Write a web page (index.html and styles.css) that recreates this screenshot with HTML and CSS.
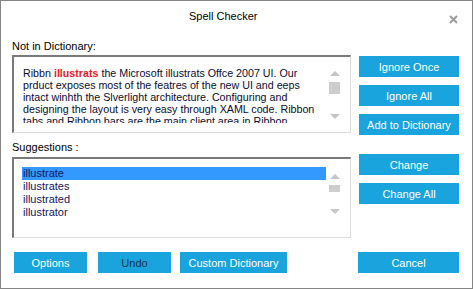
FILE: index.html
```html
<!DOCTYPE html>
<html lang="en">

<head>
    <meta charset="UTF-8">
    <title>Spell Checker</title>
    <link rel="stylesheet" href="styles.css">
</head>

<body>
    <div class="window">
        <div class="titlebar">
            <span class="title">Spell Checker</span>
            <svg class="close" width="9" height="9" viewBox="0 0 9 9">
                <path d="M1 1L8 8M8 1L1 8" stroke="#9c9c9c" stroke-width="2" />
            </svg>
        </div>
        <div class="main">
            <div class="left">
                <div class="label">Not in Dictionary:</div>
                <div class="box textbox">
                    <div class="text">
                        Ribbn <b class="err">illustrats</b> the Microsoft illustrats Offce 2007 UI. Our<br>
                        prduct exposes most of the featres of the new UI and eeps<br>
                        intact winhth the Slverlight architecture. Configuring and<br>
                        designing the layout is very easy through XAML code. Ribbon<br>
                        tabs and Ribbon bars are the main client area in Ribbon<br>
                        control.
                    </div>
                    <div class="scroll">
                        <span class="arrow up"></span>
                        <span class="thumb"></span>
                        <span class="arrow down"></span>
                    </div>
                </div>
                <div class="label label2">Suggestions :</div>
                <div class="box listbox">
                    <ul class="list">
                        <li class="sel">illustrate</li>
                        <li>illustrates</li>
                        <li>illustrated</li>
                        <li>illustrator</li>
                    </ul>
                    <div class="scroll scroll2">
                        <span class="arrow up"></span>
                        <span class="thumb"></span>
                        <span class="arrow down"></span>
                    </div>
                </div>
            </div>
            <div class="right">
                <button class="btn">Ignore Once</button>
                <button class="btn">Ignore All</button>
                <button class="btn">Add to Dictionary</button>
                <button class="btn change">Change</button>
                <button class="btn">Change All</button>
            </div>
        </div>
        <div class="footer">
            <button class="btn small">Options</button>
            <button class="btn small undo">Undo</button>
            <button class="btn custom">Custom Dictionary</button>
            <button class="btn cancel">Cancel</button>
        </div>
    </div>
</body>

</html>
```

FILE: styles.css
```css
html,
body {
    margin: 0;
    padding: 0;
    background-color: #fff;
}

body {
    font-family: "Liberation Sans", Arial, sans-serif;
    font-size: 11px;
    color: #000;
}

.window {
    width: 473px;
    height: 289px;
    box-sizing: border-box;
    border: 1px solid #858585;
    display: flex;
    flex-direction: column;
}

/* 标题栏 */
.titlebar {
    height: 38px;
    display: flex;
    align-items: flex-start;
    padding-top: 8px;
    box-sizing: border-box;
}

.title {
    margin-left: 188px;
    font-size: 11px;
    line-height: 14px;
}

.close {
    margin-left: auto;
    margin-right: 14px;
    margin-top: 6px;
}

.main {
    display: flex;
    padding: 0 13px 0 11px;
}

.left {
    width: 339px;
    display: flex;
    flex-direction: column;
}

.label {
    line-height: 14px;
    height: 14px;
    margin-bottom: 2px;
}

.label2 {
    margin-top: 7px;
    margin-bottom: 3px;
}

.box {
    box-sizing: border-box;
    border-style: solid;
    border-width: 2px 1px 1px 2px;
    border-color: #7a7a7a #dcdcdc #dcdcdc #7a7a7a;
    display: flex;
}

.textbox {
    height: 78px;
}

.text {
    flex: 1;
    height: 56px;
    overflow: hidden;
    padding: 10px 0 0 9px;
    font-size: 10.7px;
    line-height: 12px;
    white-space: nowrap;
    color: #0c0c30;
}

.err {
    color: #ee1c25;
}

.listbox {
    height: 81px;
}

.list {
    flex: 1;
    list-style: none;
    margin: 0;
    padding: 8px 0 0 8px;
    color: #16165c;
}

.list li {
    height: 13px;
    line-height: 13px;
    padding-left: 1px;
}

.list .sel {
    background-color: #3399ff;
}

/* 滚动条 */
.scroll {
    width: 13px;
    margin: 0 9px 0 2px;
    padding-top: 14px;
    display: flex;
    flex-direction: column;
    align-items: center;
}

.arrow {
    width: 0;
    height: 0;
    border-left: 5px solid transparent;
    border-right: 5px solid transparent;
}

.up {
    border-bottom: 5px solid #c6c6c6;
}

.down {
    border-top: 5px solid #c6c6c6;
}

.thumb {
    width: 11px;
    height: 12px;
    background-color: #cdcdcd;
    margin: 6px 0 20px;
}

.scroll2 {
    padding-top: 15px;
}

.scroll2 .thumb {
    height: 7px;
    margin: 6px 0 17px;
}

/* 按钮 */
.right {
    width: 100px;
    margin-left: 8px;
    padding-top: 17px;
    display: flex;
    flex-direction: column;
    gap: 8px;
}

.btn {
    font-family: "Liberation Sans", Arial, sans-serif;
    font-size: 11px;
    color: #fff;
    background-color: #19a4dd;
    border: none;
    padding: 0;
    height: 21px;
    width: 100px;
}

.change {
    margin-top: 11px;
}

.footer {
    display: flex;
    padding: 0 13px 0 13px;
    margin-top: 14px;
}

.small {
    width: 73px;
    margin-right: 11px;
}

.undo {
    color: #0b3550;
    margin-right: 9px;
}

.custom {
    width: 107px;
}

.cancel {
    width: 101px;
    margin-left: auto;
}
```
